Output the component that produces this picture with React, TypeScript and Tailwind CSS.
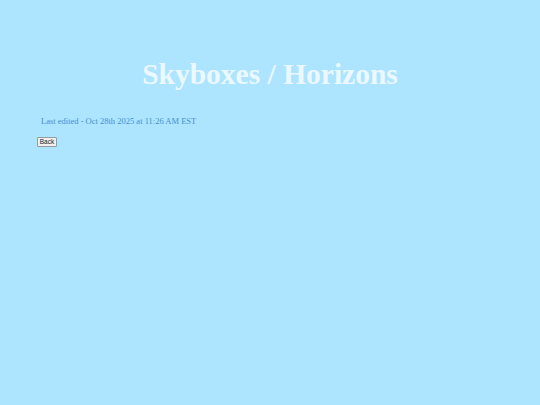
export default function App() {
  return (
    <div className="min-h-[405px] w-full bg-[#ade4ff] font-['Liberation_Serif',serif]">
      <div className="pt-[57px]">
        <h1 className="text-center text-[29.5px] leading-[34px] font-bold text-[#ecf8ff]">
          Skyboxes / Horizons
        </h1>
      </div>
      <p className="mt-[25px] pl-[41px] text-[8.5px] leading-[10px] text-[#4590d0]">
        Last edited - Oct 28th 2025 at 11:26 AM EST
      </p>
      <div className="mt-[11px] pl-[37px]">
        <button className="h-[10px] w-[20px] flex items-center justify-center border border-[#9a9a9a] bg-[#f0f0f0] text-[6.5px] leading-none text-[#222] font-['Liberation_Sans',sans-serif] rounded-[1px]">
          Back
        </button>
      </div>
    </div>
  );
}
